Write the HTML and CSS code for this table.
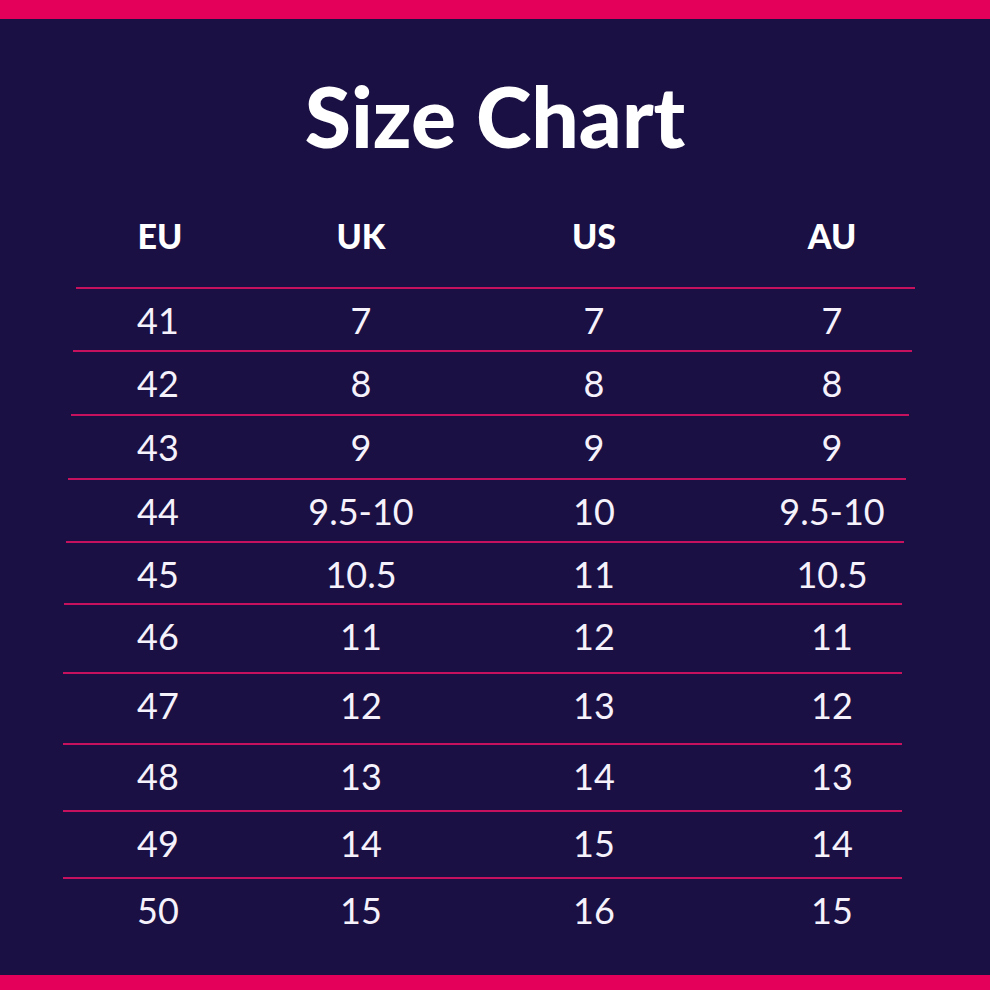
FILE: index.html
```html
<!DOCTYPE html>
<html lang="en">
<head>
<meta charset="utf-8">
<title>Size Chart</title>
<link rel="stylesheet" href="styles.css">
</head>
<body>
<div class="page">
  <div class="bar bar-top"></div>
  <main class="main">
    <h1 class="title">Size Chart</h1>
    <div class="row head">
      <div>EU</div><div>UK</div><div>US</div><div>AU</div>
    </div>
    <hr>
    <div class="row data h61"><div>41</div><div>7</div><div>7</div><div>7</div></div>
    <hr>
    <div class="row data h62"><div>42</div><div>8</div><div>8</div><div>8</div></div>
    <hr>
    <div class="row data h62"><div>43</div><div>9</div><div>9</div><div>9</div></div>
    <hr>
    <div class="row data h61"><div>44</div><div>9.5-10</div><div>10</div><div>9.5-10</div></div>
    <hr>
    <div class="row data h60"><div>45</div><div>10.5</div><div>11</div><div>10.5</div></div>
    <hr>
    <div class="row data h67"><div>46</div><div>11</div><div>12</div><div>11</div></div>
    <hr>
    <div class="row data h69"><div>47</div><div>12</div><div>13</div><div>12</div></div>
    <hr>
    <div class="row data h65"><div>48</div><div>13</div><div>14</div><div>13</div></div>
    <hr>
    <div class="row data h65"><div>49</div><div>14</div><div>15</div><div>14</div></div>
    <hr>
    <div class="row data"><div>50</div><div>15</div><div>16</div><div>15</div></div>
  </main>
  <div class="bar bar-bottom"></div>
</div>
</body>
</html>
```

FILE: styles.css
```css
html, body {
  margin: 0;
  padding: 0;
  background: #1b1044;
}

.page {
  width: 990px;
  height: 990px;
  display: flex;
  flex-direction: column;
  overflow: hidden;
  font-family: Lato, "Open Sans", sans-serif;
  color: #ffffff;
}

.bar {
  background: #e4005a;
  flex: none;
}

.bar-top {
  height: 19px;
}

.bar-bottom {
  height: 15px;
}

.main {
  flex: 1;
  background: #1b1044;
  display: flex;
  flex-direction: column;
}

.title {
  margin: 55px 0 0 0;
  font-size: 84px;
  line-height: 84px;
  font-weight: 900;
  text-align: center;
  letter-spacing: 0;
  color: #ffffff;
}

.row {
  display: grid;
  grid-template-columns: 180px 226px 240px 236px;
  padding-left: 68px;
  text-align: center;
}

.head {
  margin-top: 61px;
  font-size: 34px;
  line-height: 34px;
  font-weight: 900;
  margin-bottom: 34px;
}

.head div:first-child {
  margin-left: 4px;
}

.data {
  box-sizing: border-box;
  padding-top: 14px;
  font-size: 36px;
  line-height: 35px;
  font-weight: 400;
  color: #f6f2fb;
}

.h60 { height: 60px; }
.h61 { height: 61px; }
.h62 { height: 62px; }
.h65 { height: 65px; }
.h67 { height: 67px; }
.h69 { height: 69px; }

hr {
  border: 0;
  height: 2px;
  margin: 0;
  background: #c6115e;
  flex: none;
}

hr:nth-of-type(1) { margin-left: 76px; width: 839px; }
hr:nth-of-type(2) { margin-left: 73px; width: 839px; }
hr:nth-of-type(3) { margin-left: 71px; width: 838px; }
hr:nth-of-type(4) { margin-left: 68px; width: 838px; }
hr:nth-of-type(5) { margin-left: 66px; width: 838px; }
hr:nth-of-type(6) { margin-left: 64px; width: 838px; }
hr:nth-of-type(7) { margin-left: 63px; width: 839px; }
hr:nth-of-type(8) { margin-left: 63px; width: 839px; }
hr:nth-of-type(9) { margin-left: 63px; width: 839px; }
hr:nth-of-type(10) { margin-left: 63px; width: 839px; }
```
